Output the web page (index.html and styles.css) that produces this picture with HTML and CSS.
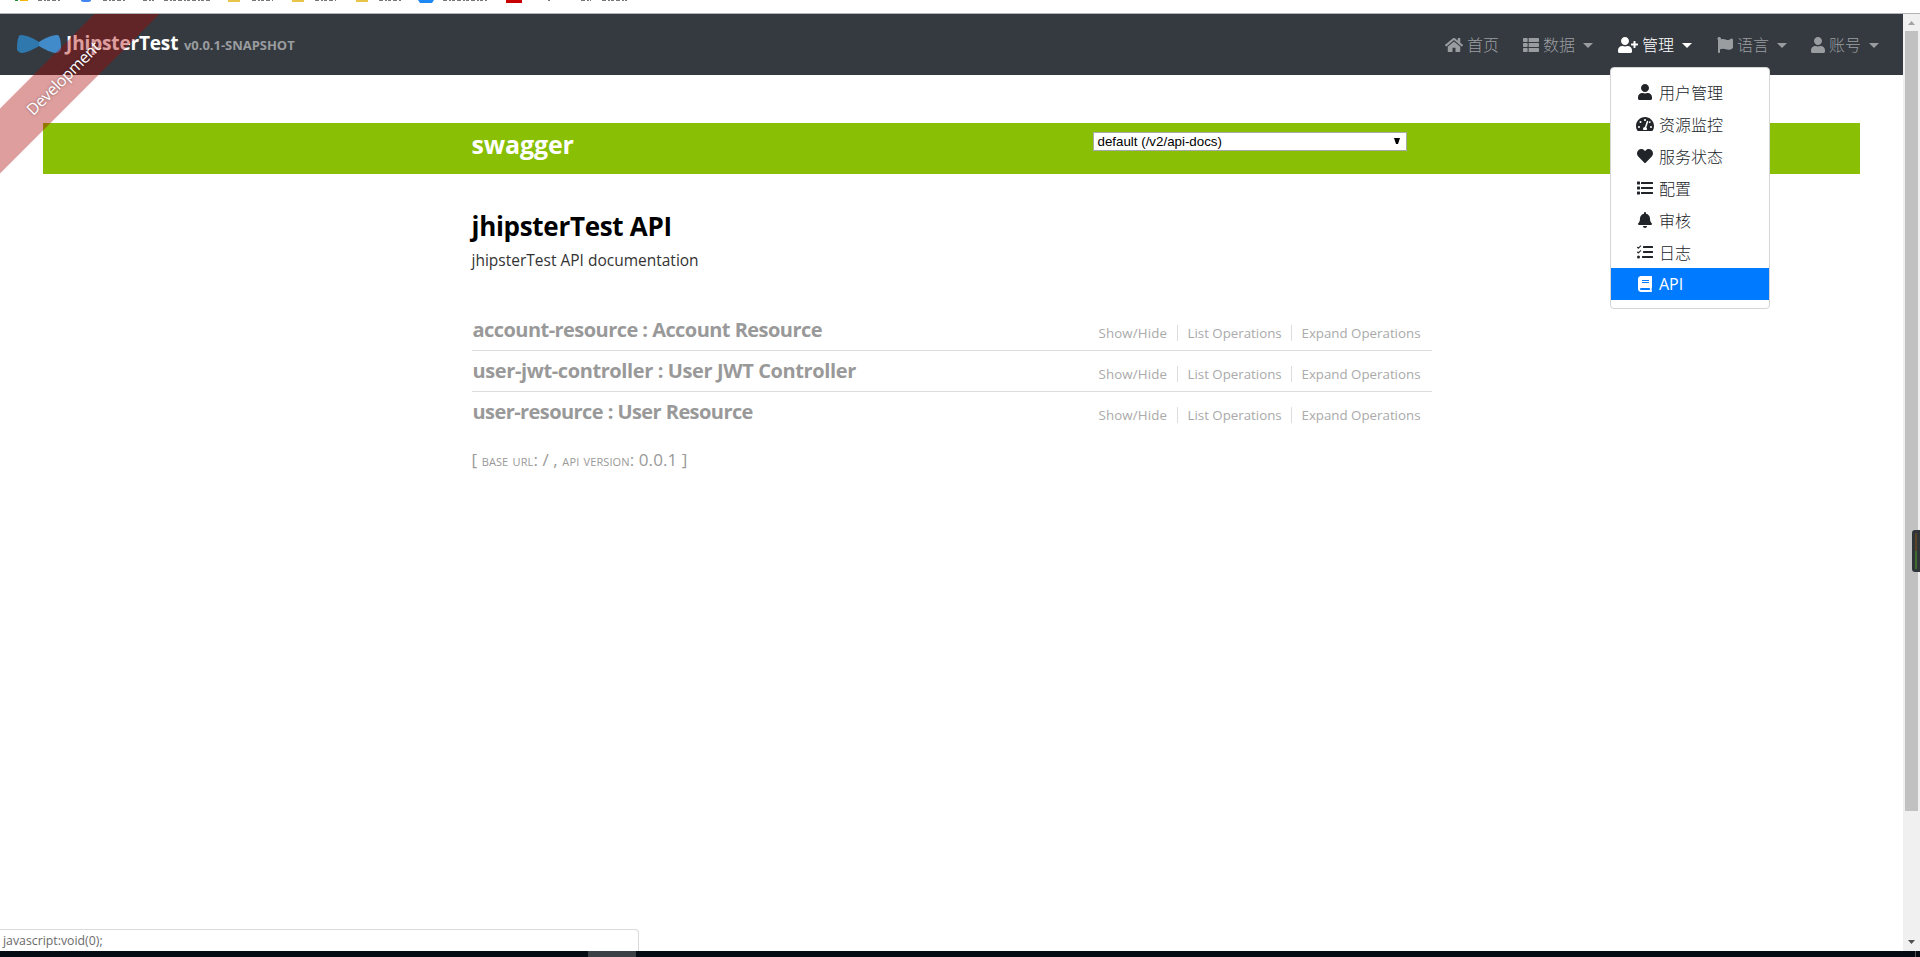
FILE: index.html
```html
<!DOCTYPE html>
<html lang="zh-CN">
<head>
<meta charset="utf-8">
<title>API</title>
<link rel="stylesheet" href="styles.css">
</head>
<body>
<svg class="defs" width="0" height="0">
<symbol id="user" viewBox="0 0 448 512"><path d="M224 256c70.700 0 128-57.300 128-128S294.700 0 224 0 96 57.300 96 128s57.300 128 128 128zm89.600 32h-16.700c-22.200 10.200-46.900 16-72.900 16s-50.600-5.800-72.900-16h-16.700C60.200 288 0 348.200 0 422.400V464c0 26.500 21.500 48 48 48h352c26.500 0 48-21.500 48-48v-41.600c0-74.200-60.200-134.400-134.400-134.400z"/></symbol>
<symbol id="userplus" viewBox="0 0 640 512"><path d="M624 208h-64v-64c0-8.800-7.200-16-16-16h-32c-8.800 0-16 7.200-16 16v64h-64c-8.800 0-16 7.200-16 16v32c0 8.800 7.200 16 16 16h64v64c0 8.800 7.200 16 16 16h32c8.800 0 16-7.200 16-16v-64h64c8.800 0 16-7.200 16-16v-32c0-8.800-7.200-16-16-16zm-400 48c70.700 0 128-57.300 128-128S294.700 0 224 0 96 57.300 96 128s57.300 128 128 128zm89.600 32h-16.700c-22.200 10.200-46.900 16-72.900 16s-50.600-5.800-72.900-16h-16.700C60.200 288 0 348.200 0 422.400V464c0 26.500 21.500 48 48 48h352c26.500 0 48-21.500 48-48v-41.600c0-74.200-60.200-134.400-134.400-134.400z"/></symbol>
<symbol id="home" viewBox="0 0 576 512"><path d="M488 312.700V456c0 13.300-10.700 24-24 24H348c-6.600 0-12-5.400-12-12V356c0-6.600-5.400-12-12-12h-72c-6.600 0-12 5.400-12 12v112c0 6.600-5.400 12-12 12H112c-13.300 0-24-10.700-24-24V312.700c0-3.600 1.600-7 4.400-9.300l188-154.800c4.400-3.600 10.800-3.600 15.300 0l188 154.800c2.700 2.300 4.300 5.700 4.300 9.300zm83.600-60.900L488 182.900V44.400c0-6.600-5.400-12-12-12h-56c-6.600 0-12 5.400-12 12V117l-89.500-73.700c-17.700-14.600-43.300-14.600-61 0L4.400 251.800c-5.100 4.200-5.800 11.800-1.600 16.900l25.500 31c4.200 5.100 11.800 5.800 16.900 1.600l235.200-193.700c4.400-3.600 10.800-3.600 15.300 0l235.200 193.700c5.100 4.200 12.700 3.500 16.900-1.600l25.500-31c4.200-5.200 3.400-12.700-1.700-16.900z"/></symbol>
<symbol id="thlist" viewBox="0 0 512 512"><path d="M149 216v80c0 13-11 24-24 24H24c-13 0-24-11-24-24v-80c0-13 11-24 24-24h101c13 0 24 11 24 24zM0 376v80c0 13 11 24 24 24h101c13 0 24-11 24-24v-80c0-13-11-24-24-24H24c-13 0-24 11-24 24zM125 32H24C11 32 0 43 0 56v80c0 13 11 24 24 24h101c13 0 24-11 24-24V56c0-13-11-24-24-24zm56 448h307c13 0 24-11 24-24v-80c0-13-11-24-24-24H181v128zM181 32v128h307c13 0 24-11 24-24V56c0-13-11-24-24-24zM181 192v128h307c13 0 24-11 24-24v-80c0-13-11-24-24-24z"/></symbol>
<symbol id="flag" viewBox="0 0 512 512"><path d="M350 98c-50 0-91-34-158-34-25 0-48 5-69 13A56 56 0 1 0 32 95v393c0 13 11 24 24 24h16c13 0 24-11 24-24v-94c28-12 64-22 114-22 50 0 91 33 159 33 48 0 86-16 122-41 13-9 21-24 21-40V96c0-35-36-58-68-43-35 16-64 45-94 45z"/></symbol>
<symbol id="gauge" viewBox="0 0 576 512"><path fill-rule="evenodd" d="M288 32C129 32 0 161 0 320c0 53 14 102 39 145 6 9 16 15 27 15h444c11 0 21-6 27-15 25-43 39-92 39-145C576 161 447 32 288 32zm0 64c18 0 32 14 32 32s-14 32-32 32-32-14-32-32 14-32 32-32zM96 384a32 32 0 1 1 0-64 32 32 0 0 1 0 64zm48-160a32 32 0 1 1 0-64 32 32 0 0 1 0 64zm247-41-61 184c26 19 26 49 14 81H232c-20-57 12-95 52-96l61-184c4-13 18-20 31-15 12 4 19 18 15 30zm25 41c-8-5-9-10-5-21 10-31 38-51 53-27 17 28-12 60-48 48zm64 160a32 32 0 1 1 0-64 32 32 0 0 1 0 64z"/></symbol>
<symbol id="heart" viewBox="0 0 512 512"><path d="M462 62c-55-47-136-38-186 14l-20 20-20-20C186 24 105 15 50 62c-63 54-66 150-10 208l194 200c12 13 32 13 44 0l194-200c56-58 53-154-10-208z"/></symbol>
<symbol id="list" viewBox="0 0 512 512"><path d="M16 48h64q16 0 16 16v64q0 16-16 16H16q-16 0-16-16V64q0-16 16-16zm0 160h64q16 0 16 16v64q0 16-16 16H16q-16 0-16-16v-64q0-16 16-16zm0 160h64q16 0 16 16v64q0 16-16 16H16q-16 0-16-16v-64q0-16 16-16zM144 64h352q16 0 16 16v32q0 16-16 16H144q-16 0-16-16V80q0-16 16-16zm0 160h352q16 0 16 16v32q0 16-16 16H144q-16 0-16-16v-32q0-16 16-16zm0 160h352q16 0 16 16v32q0 16-16 16H144q-16 0-16-16v-32q0-16 16-16z"/></symbol>
<symbol id="bell" viewBox="0 0 448 512"><path d="M224 512c35 0 64-29 64-64H160c0 35 29 64 64 64zm215-150c-19-21-55-52-55-154 0-78-54-140-128-155V32a32 32 0 1 0-64 0v21C118 68 64 130 64 208c0 102-36 133-55 154-21 23-5 54 23 54h384c28 0 44-31 23-54z"/></symbol>
<symbol id="tasks" viewBox="0 0 512 512"><path d="M139 62 67 133l-16 16c-5 5-13 5-18 0L3 120c-4-5-4-13 0-17l14-14c5-5 13-5 18 0l17 14 54-55c5-4 13-4 18 0l15 14zm0 154-88 88c-5 5-13 5-18 0L3 275c-4-5-4-13 0-17l14-15c5-4 13-4 18 0l17 15 54-55c5-4 13-4 18 0l15 13zM48 368a48 48 0 1 1 0 96 48 48 0 0 1 0-96zM208 64h288q16 0 16 16v32q0 16-16 16H208q-16 0-16-16V80q0-16 16-16zm0 160h288q16 0 16 16v32q0 16-16 16H208q-16 0-16-16v-32q0-16 16-16zm-32 160h320q16 0 16 16v32q0 16-16 16H176q-16 0-16-16v-32q0-16 16-16z"/></symbol>
<symbol id="book" viewBox="0 0 448 512"><path fill-rule="evenodd" d="M448 360V24c0-13-11-24-24-24H96C43 0 0 43 0 96v320c0 53 43 96 96 96h328c13 0 24-11 24-24v-16c0-8-4-14-9-19-4-15-4-59 0-74 5-4 9-11 9-19zM128 128h224v32H128zm0 64h224v32H128zm253 256H96c-42 0-42-64 0-64h285c-2 17-2 47 0 64z"/></symbol>
</svg>

<div class="window">
<div class="bookmarks">
<svg width="640" height="3">
<path fill="#1e8e3e" d="M15 0h3v1h-3z"/><path fill="#f4b400" d="M20 0h8v1h-8z"/>
<path fill="#4285f4" d="M81 0h10v1l-2 1h-6l-2-1z"/>
<path fill="#e8c548" d="M228 0h12v2h-12zM292 0h12v2h-12zM356 0h12v2h-12z"/>
<path fill="#1e88f5" d="M418 0h16l-2 3h-12z"/><path fill="#c80000" d="M506 0h16v3h-16z"/>
<path class="marks" d="M38 .5H61M103 .5h23M143 .5h11M164 .5H210M252 .5h21M315 .5h21M379 .5h22M443 .5h44M548 .5h2M581 .5h10M602 .5h25"/>
</svg>
</div>
<div class="view">
<div class="page">
<nav class="navbar">
<a class="brand">
<svg class="logo" width="46" height="20" viewBox="0 0 46 20"><path fill="#2f78ad" d="M1 16C1 11 1 6 3 2 5-1 17 4 23 8v4c-7 4-16 9-20 6z"/><path fill="#428bca" d="M45 16c0-5 0-10-2-14-2-3-14 2-20 6v4c7 4 16 9 20 6z"/></svg>
<span class="title">JhipsterTest</span><span class="version">v0.0.1-SNAPSHOT</span>
</a>
<ul class="menu">
<li class="n1"><svg width="18" height="16"><use href="#home"/></svg><span>首页</span></li>
<li class="n2"><svg width="16" height="16"><use href="#thlist"/></svg><span>数据</span><i class="caret"></i></li>
<li class="n3 active"><svg width="20" height="16"><use href="#userplus"/></svg><span>管理</span><i class="caret"></i>
<div class="dropdown">
<a><svg width="18" height="16"><use href="#user"/></svg><span>用户管理</span></a>
<a><svg width="18" height="16"><use href="#gauge"/></svg><span>资源监控</span></a>
<a><svg width="18" height="16"><use href="#heart"/></svg><span>服务状态</span></a>
<a><svg width="18" height="16"><use href="#list"/></svg><span>配置</span></a>
<a><svg width="18" height="16"><use href="#bell"/></svg><span>审核</span></a>
<a><svg width="18" height="16"><use href="#tasks"/></svg><span>日志</span></a>
<a class="selected"><svg width="18" height="16"><use href="#book"/></svg><span class="lat">API</span></a>
</div>
</li>
<li class="n4"><svg width="16" height="16"><use href="#flag"/></svg><span>语言</span><i class="caret"></i></li>
<li class="n5"><svg width="14" height="16"><use href="#user"/></svg><span>账号</span><i class="caret"></i></li>
</ul>
</nav>
<div class="ribbon"><span>Development</span></div>
<main>
<header class="swagger">
<div class="wrap">
<span class="swname">swagger</span>
<div class="select"><span>default (/v2/api-docs)</span><svg width="6" height="7"><path d="M0 0h6L4 6H2z"/></svg></div>
</div>
</header>
<section class="docs">
<h1>jhipsterTest API</h1>
<p class="desc">jhipsterTest API documentation</p>
<ul class="resources">
<li><h2 class="r1">account-resource : Account Resource</h2><div class="ops"><a class="o1">Show/Hide</a><a class="o2">List Operations</a><a class="o3">Expand Operations</a></div></li>
<li><h2 class="r2">user-jwt-controller : User JWT Controller</h2><div class="ops"><a class="o1">Show/Hide</a><a class="o2">List Operations</a><a class="o3">Expand Operations</a></div></li>
<li><h2 class="r3">user-resource : User Resource</h2><div class="ops"><a class="o1">Show/Hide</a><a class="o2">List Operations</a><a class="o3">Expand Operations</a></div></li>
</ul>
<p class="foot">[ <span class="sc">base url</span>: / , <span class="sc">api version</span>: 0.0.1 ]</p>
</section>
</main>
<div class="status">javascript:void(0);</div>
</div>
<div class="scrollbar">
<svg width="17" height="17"><path fill="#a3a3a3" d="M5 11h7L8.500 7z"/></svg>
<div class="thumb"></div>
<svg class="down" width="17" height="17"><path fill="#505050" d="M5 6h7L8.500 10z"/></svg>
<div class="gadget"></div>
</div>
</div>
<div class="taskbar"><div class="task"></div><div class="peek"></div></div>
</div>
</body>
</html>
```
FILE: styles.css
```css
* { box-sizing: border-box; }
body { margin: 0; background: #fff; font-family: "Open Sans", "Noto Sans CJK SC", sans-serif; color: #212529; overflow: hidden; }
ul, h1, h2, p { margin: 0; padding: 0; list-style: none; }
svg { display: block; flex: none; fill: currentColor; }
.defs { position: absolute; }
.window { height: 957px; display: flex; flex-direction: column; }
.bookmarks { height: 14px; flex: none; border-bottom: 1px solid #b2b4b6; }
.marks { stroke: #777; stroke-width: 1; stroke-dasharray: 4 2 2 1 3 2; }
.view { flex: 1; display: flex; min-height: 0; }
.page { flex: 1; position: relative; overflow: hidden; display: flex; flex-direction: column; }
.navbar { height: 61px; background: #353a40; display: flex; justify-content: space-between; padding: 0 24px 0 16px; flex: none; }
.brand { display: flex; align-items: flex-start; }
.logo { margin-top: 20px; }
.title { margin: 15px 0 0 4px; color: #fff; font-weight: 700; font-size: 19px; line-height: 29px; width: 113px; letter-spacing: -.15px; white-space: nowrap; }
.version { margin: 22px 0 0 5px; color: #999c9f; font-weight: 700; font-size: 13px; letter-spacing: -.03px; line-height: 18px; white-space: nowrap; }
.menu { display: flex; height: 61px; color: #9a9da0; font-size: 16px; }
.menu li { display: flex; align-items: center; position: relative; white-space: nowrap; padding-top: 1px; }
.menu li > span { margin-left: 4px; line-height: 24px; font-weight: 300; }
.n1, .n4 { margin-right: 24px; }
.n2, .n3 { margin-right: 25px; }
.menu .active { color: #fff; }
.caret { border: 5px solid transparent; border-top-color: currentColor; border-bottom: 0; margin-left: 8px; }
.dropdown { position: absolute; left: -8px; top: 53px; width: 160px; height: 242px; padding: 8px 0; background: #fff; border: 1px solid #d5d5d5; border-radius: 4px; color: #212529; z-index: 5; }
.dropdown a { display: flex; align-items: center; height: 32px; padding-left: 25px; gap: 5px; font-size: 16px; font-weight: 300; }
.dropdown span { margin-top: -1px; }
.dropdown .selected { background: #007bff; color: #fff; }
.dropdown .lat { font-weight: 400; margin-top: 0; }
.ribbon { position: absolute; left: -57px; top: 41px; width: 240px; height: 46px; background: rgba(170,0,0,.38); transform: rotate(-45deg); display: flex; align-items: center; justify-content: center; color: #fff; font-size: 16px; letter-spacing: -.4px; z-index: 3; text-shadow: 0 0 3px rgba(0,0,0,.4); }
.page main { padding: 48px 43px 0; }
.swagger { height: 51px; background: #89bf04; }
.wrap, .docs { width: 960px; margin: 0 auto; }
.wrap { display: flex; justify-content: space-between; padding: 9px 25px 0 0; }
.swname { color: #fff; font-weight: 700; font-size: 25px; line-height: 25px; letter-spacing: -.15px; }
.select { width: 314px; height: 19px; background: #fff; border: 1px solid #a9a9a9; display: flex; justify-content: space-between; align-items: center; padding: 0 6px 0 4px; font: 13.33px/17px "Liberation Sans", Arial, sans-serif; color: #000; }
.docs { padding-top: 33px; }
h1 { font-size: 26px; line-height: 38px; color: #000; letter-spacing: -.3px; }
.desc { font-size: 15.5px; line-height: 24px; color: #333; margin-top: 3px; }
.resources { margin-top: 38px; }
.resources li { height: 41px; display: flex; justify-content: space-between; border-bottom: 1px solid #ddd; padding-left: 1px; }
.resources li:last-child { border: 0; }
h2 { font-size: 20px; line-height: 27px; padding-top: 6px; color: #999; white-space: nowrap; }
.r1 { letter-spacing: -.55px; }
.r2 { letter-spacing: -.39px; }
.r3 { letter-spacing: -.57px; }
.ops { display: flex; padding: 15px 12px 0 0; font-size: 13.3px; color: #aaa; }
.ops a { height: 16px; line-height: 16px; white-space: nowrap; padding-left: 10px; }
.ops a + a { border-left: 1px solid #ddd; }
.o1 { width: 88px; letter-spacing: .12px; }
.o2 { width: 114px; }
.o3 { width: 129px; }
.foot { margin-top: 13px; padding-left: 0; font-size: 17px; line-height: 28px; color: #999; white-space: nowrap; letter-spacing: .1px; }
.sc { font-variant: small-caps; font-size: 16px; }
.status { position: absolute; left: 0; bottom: 0; width: 639px; height: 22px; border: 1px solid #dadada; border-left: 0; border-bottom: 0; border-radius: 0 4px 0 0; padding-left: 3px; font-size: 12.3px; line-height: 22px; color: #6b6b6b; background: #fff; }
.scrollbar { width: 17px; background: #f0f0f0; position: relative; display: flex; flex-direction: column; align-items: center; }
.thumb { width: 13px; height: 780px; background: #c1c1c1; }
.down { margin-top: auto; }
.gadget { position: absolute; right: 0; top: 516px; width: 8px; height: 42px; background: linear-gradient(#5b4328 50%, #3f6b2e 50%) 3px 3px / 2px 36px no-repeat #30353a; border-radius: 3px 0 0 3px; }
.taskbar { height: 6px; flex: none; background: #040b12; display: flex; padding-left: 588px; }
.task { width: 48px; background: #3a4045; }
.peek { width: 1px; background: #555; margin-left: auto; margin-right: 4px; }
```
